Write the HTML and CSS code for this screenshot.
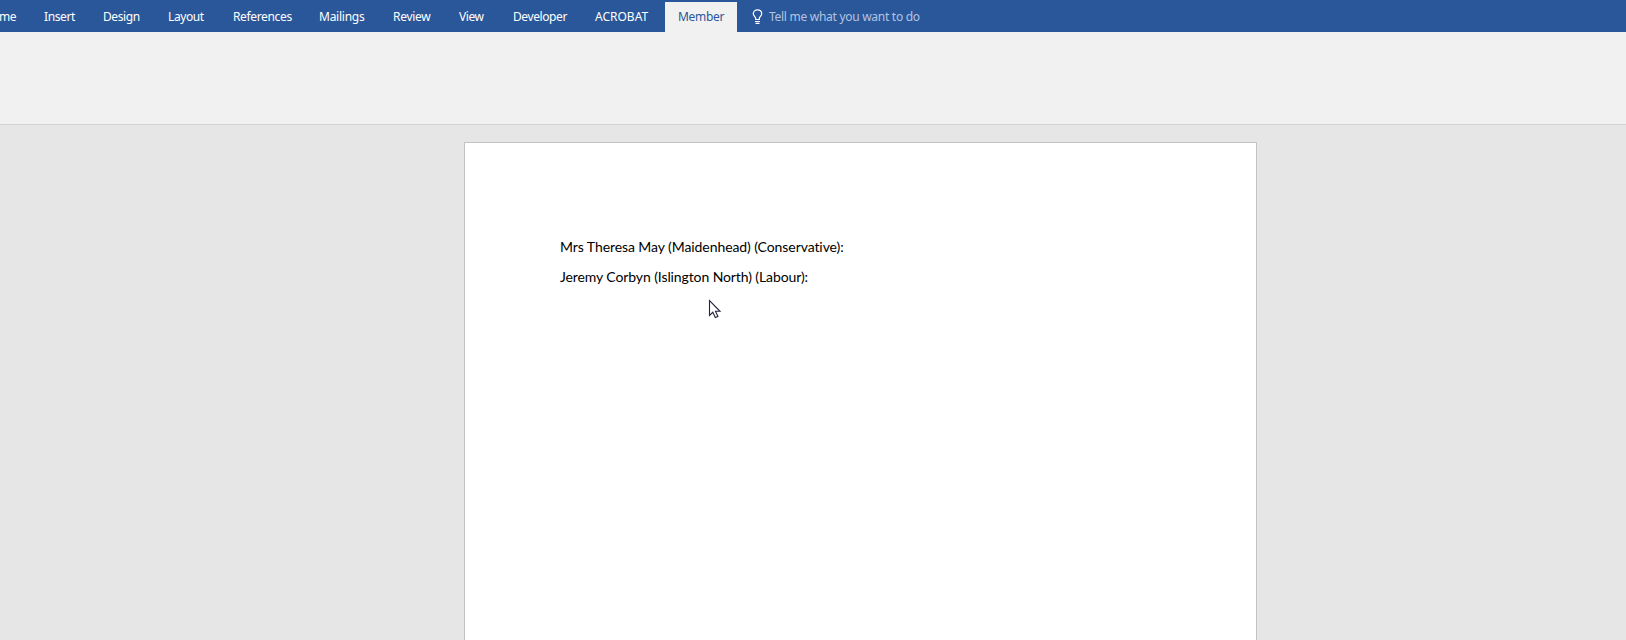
FILE: index.html
```
<!DOCTYPE html>
<html lang="en">
<head>
<meta charset="utf-8">
<title>Document</title>
<link rel="stylesheet" href="styles.css">
</head>
<body>
<nav class="tabs">
  <span class="tab home">me</span>
  <span class="tab insert">Insert</span>
  <span class="tab design">Design</span>
  <span class="tab layout">Layout</span>
  <span class="tab references">References</span>
  <span class="tab mailings">Mailings</span>
  <span class="tab review">Review</span>
  <span class="tab view">View</span>
  <span class="tab developer">Developer</span>
  <span class="tab acrobat">ACROBAT</span>
  <span class="tab member">Member</span>
  <span class="tell">
    <svg class="bulb" width="12" height="16" viewBox="0 0 12 16" fill="none" stroke="#fff" stroke-width="1.2">
      <path d="M3.7 10.5V9.2C3.4 7.9 1.3 6.8 1.3 4.8C1.3 2.3 3.2.9 5.5.9S9.7 2.3 9.7 4.8C9.7 6.8 7.6 7.9 7.3 9.2V10.5Z"/>
      <path d="M3 12.5H8M3.5 14.4H7.5"/>
    </svg>
    <span class="prompt">Tell me what you want to do</span>
  </span>
</nav>
<div class="ribbon"></div>
<main class="workspace">
  <article class="page">
    <p class="line first">Mrs Theresa May (Maidenhead) (Conservative):</p>
    <p class="line second">Jeremy Corbyn (Islington North) (Labour):</p>
  </article>
</main>
<svg class="cursor" width="14" height="21" viewBox="0 0 14 21">
  <path d="M1.5 1.5V16.5L4.8 13.3L7.3 18.6L9.9 17.4L7.5 12.3H12Z" fill="#fff" stroke="#24243c" stroke-width="1.1"/>
</svg>
</body>
</html>
```
FILE: styles.css
```
* { box-sizing: border-box; }
body {
  margin: 0;
  height: 640px;
  overflow: hidden;
  display: flex;
  flex-direction: column;
  background: #e6e6e6;
}
.tabs {
  display: flex;
  height: 32px;
  padding-top: 2px;
  background: #2a579a;
  color: #fff;
  font: 12px/30px "Noto Sans", "Open Sans", sans-serif;
  white-space: nowrap;
}
.tab { flex: none; letter-spacing: -0.4px; }
.home { width: 44px; text-indent: -1px; }
.insert { width: 59px; }
.design { width: 65px; }
.layout { width: 65px; }
.references { width: 86px; letter-spacing: -0.35px; }
.mailings { width: 74px; letter-spacing: -0.25px; }
.review { width: 66px; letter-spacing: -0.3px; }
.view { width: 54px; }
.developer { width: 82px; letter-spacing: -0.4px; }
.acrobat { width: 70px; letter-spacing: 0; }
.member {
  width: 72px;
  padding-left: 13px;
  background: #f1f1f1;
  color: #2a579a;
  letter-spacing: -0.3px;
}
.tell { display: flex; padding-left: 15px; color: #b3c4e0; }
.bulb { margin-top: 7px; }
.prompt { margin-left: 5px; letter-spacing: -0.28px; }
.ribbon {
  flex: none;
  height: 93px;
  background: #f1f1f1;
  border-bottom: 1px solid #d2d2d2;
}
.workspace { flex: 1; padding: 17px 0 0 464px; }
.page {
  width: 793px;
  height: 520px;
  padding: 89px 0 0 95px;
  background: #fff;
  border: 1px solid #c3c3c3;
}
.line {
  margin: 0;
  color: #000;
  font: 14px/30px Lato, sans-serif;
  font-variant-ligatures: none;
  white-space: nowrap;
}
.first { letter-spacing: -0.08px; }
.second { letter-spacing: -0.1px; }
.cursor { position: absolute; left: 708px; top: 299px; }
```
